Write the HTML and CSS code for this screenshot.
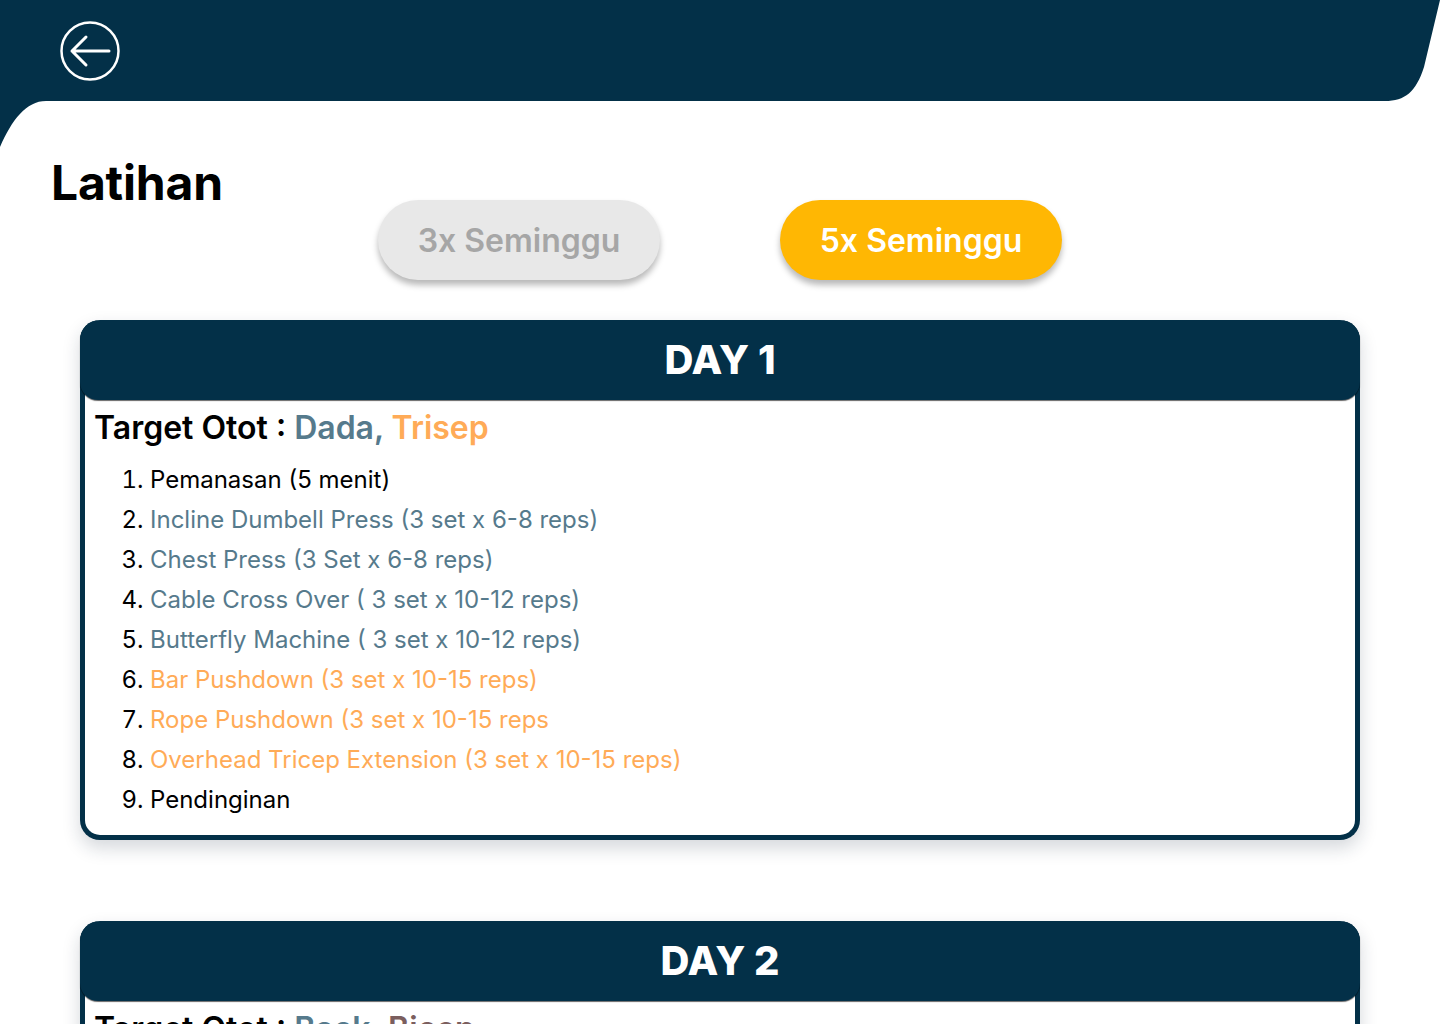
FILE: index.html
```html
<!DOCTYPE html>
<html lang="id">
<head>
<meta charset="utf-8">
<title>Latihan</title>
<link rel="stylesheet" href="styles.css">
</head>
<body>
<header class="topbar">
  <svg class="topbar-bg" width="1440" height="150" viewBox="0 0 1440 150" aria-hidden="true">
    <path d="M0,0 H1440 L1424,67 C1416,92 1405,101 1385,101 H46 C26,101 12,120 0,147 Z" fill="#033048"/>
  </svg>
  <button class="back" aria-label="Kembali">
    <svg width="60" height="60" viewBox="0 0 60 60">
      <circle cx="30" cy="30" r="28.5" fill="none" stroke="#fff" stroke-width="2.5"/>
      <path d="M49 30 H12 M26 16 L12 30 L26 44" fill="none" stroke="#fff" stroke-width="3" stroke-linecap="round" stroke-linejoin="round"/>
    </svg>
  </button>
</header>

<main class="content">
  <div class="title-row">
    <h1 class="title">Latihan</h1>
    <div class="toggle">
      <button class="pill pill-off">3x Seminggu</button>
      <button class="pill pill-on">5x Seminggu</button>
    </div>
  </div>

  <section class="card">
    <div class="card-head">DAY 1</div>
    <div class="card-body">
      <h2 class="target">Target Otot : <span class="c-slate">Dada,</span> <span class="c-orange">Trisep</span></h2>
      <ol class="steps">
        <li>Pemanasan (5 menit)</li>
        <li><span class="c-slate">Incline Dumbell Press (3 set x 6-8 reps)</span></li>
        <li><span class="c-slate">Chest Press (3 Set x 6-8 reps)</span></li>
        <li><span class="c-slate">Cable Cross Over ( 3 set x 10-12 reps)</span></li>
        <li><span class="c-slate">Butterfly Machine ( 3 set x 10-12 reps)</span></li>
        <li><span class="c-orange">Bar Pushdown (3 set x 10-15 reps)</span></li>
        <li><span class="c-orange">Rope Pushdown (3 set x 10-15 reps</span></li>
        <li><span class="c-orange">Overhead Tricep Extension (3 set x 10-15 reps)</span></li>
        <li>Pendinginan</li>
      </ol>
    </div>
  </section>

  <section class="card card-next">
    <div class="card-head">DAY 2</div>
    <div class="card-body">
      <h2 class="target">Target Otot : <span class="c-slate">Back,</span> <span class="c-brown">Bicep</span></h2>
      <ol class="steps">
        <li>Pemanasan (5 menit)</li>
        <li><span class="c-slate">Lat Pulldown (3 set x 8-10 reps)</span></li>
        <li><span class="c-slate">Seated Row (3 set x 8-10 reps)</span></li>
        <li>Pendinginan</li>
      </ol>
    </div>
  </section>
</main>
</body>
</html>
```
FILE: styles.css
```css
* { box-sizing: border-box; }
html, body { margin: 0; padding: 0; }
body {
  font-family: Inter, "Noto Sans", sans-serif;
  background: #fff;
  color: #000;
  width: 1440px;
  overflow-x: hidden;
}

.topbar {
  position: relative;
  height: 101px;
  padding: 21px 0 0 60px;
}
.topbar-bg {
  position: absolute;
  left: 0;
  top: 0;
}
.back {
  position: relative;
  display: block;
  width: 60px;
  height: 60px;
  padding: 0;
  border: 0;
  background: none;
  cursor: pointer;
}
.back svg { display: block; }

.content {
  padding: 0 80px 40px;
}

.title-row {
  display: flex;
  align-items: flex-start;
  margin-top: 52px;
}
.title {
  margin: 0 0 0 -29px;
  width: 327px;
  font-size: 48px;
  line-height: 60px;
  font-weight: 700;
  letter-spacing: -0.2px;
}
.toggle {
  display: flex;
  gap: 120px;
  margin-top: 47px;
}
.pill {
  width: 282px;
  height: 80px;
  border: 0;
  border-radius: 40px;
  font-family: Inter, "Noto Sans", sans-serif;
  font-size: 32px;
  font-weight: 600;
  box-shadow: 0 5px 6px rgba(0, 0, 0, 0.28);
  cursor: pointer;
}
.pill-off {
  background: #e8e8e8;
  color: #a6a6a6;
}
.pill-on {
  background: #ffb703;
  color: #fff;
}

.card {
  margin-top: 40px;
  border: 5px solid #033048;
  border-top: 0;
  border-radius: 20px;
  background: #fff;
  box-shadow: 0 8px 18px rgba(20, 40, 60, 0.18);
}
.card-next { margin-top: 81px; }
.card-head {
  margin: 0 -5px;
  height: 80px;
  background: #033048;
  border-radius: 20px 20px 18px 18px;
  box-shadow: 0 1px 1px rgba(0, 0, 0, 0.6);
  color: #fff;
  font-size: 40px;
  font-weight: 800;
  line-height: 80px;
  text-align: center;
}
.card-body {
  padding: 8px 10px 15px;
}
.target {
  margin: 0 0 0 -1px;
  font-size: 32px;
  line-height: 40px;
  font-weight: 600;
}
.steps {
  margin: 12px 0 0;
  padding-left: 55px;
  font-size: 24px;
  line-height: 40px;
  color: #000;
}
.c-slate { color: #567a8c; }
.c-orange { color: #ffab57; }
.c-brown { color: #7b5e5e; }
```
